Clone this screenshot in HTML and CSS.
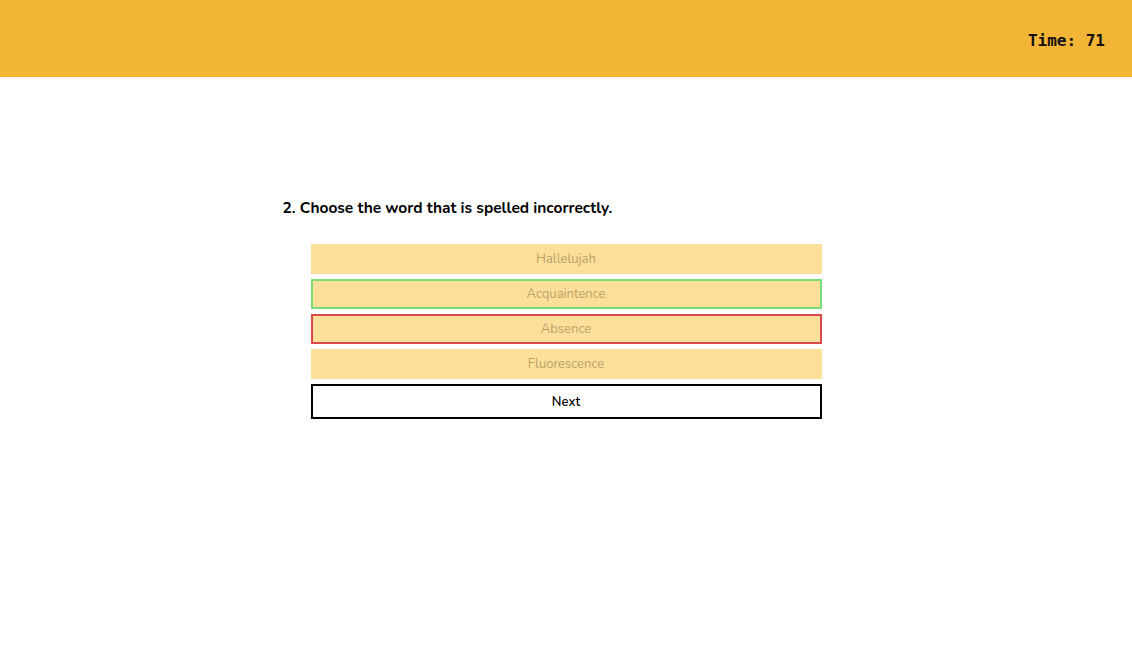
FILE: index.html
```html
<!DOCTYPE html>
<html>
<head>
<meta charset="utf-8">
<link rel="stylesheet" href="styles.css">
</head>
<body>
<header class="topbar">
  <span class="timer">Time: 71</span>
</header>
<main class="quiz">
  <h2 class="question">2. Choose the word that is spelled incorrectly.</h2>
  <div class="options">
    <div class="option">Hallelujah</div>
    <div class="option correct">Acquaintence</div>
    <div class="option wrong">Absence</div>
    <div class="option">Fluorescence</div>
    <button class="next">Next</button>
  </div>
</main>
</body>
</html>
```
FILE: styles.css
```css
* { box-sizing: border-box; }
html, body { margin: 0; padding: 0; background: #fff; }
body { font-family: "Nunito", Lato, "Open Sans", sans-serif; color: #000; }
.topbar {
  height: 77px;
  background: #f2b535;
  display: flex;
  align-items: center;
  justify-content: flex-end;
  padding-right: 27px;
  padding-top: 4px;
}
.timer {
  font-family: "DejaVu Sans Mono", monospace;
  font-weight: bold;
  font-size: 16px;
  color: #111;
}
.quiz {
  width: 567px;
  margin: 0 auto;
  padding-top: 120px;
}
.question {
  margin: 0 0 25px 0;
  font-size: 15.5px;
  font-weight: bold;
  line-height: 22px;
}
.options {
  margin: 0 28px;
  display: flex;
  flex-direction: column;
  gap: 5px;
}
.option {
  height: 30px;
  background: #fcdf98;
  color: #b9a36c;
  font-size: 13px;
  display: flex;
  align-items: center;
  justify-content: center;
  border: 2px solid transparent;
}
.option.correct { border-color: #7ddc7a; }
.option.wrong { border-color: #d94a4a; }
.next {
  height: 35px;
  background: #fff;
  border: 2px solid #000;
  font-family: inherit;
  font-size: 13px;
  font-weight: 600;
  color: #000;
  padding: 0;
}
```
